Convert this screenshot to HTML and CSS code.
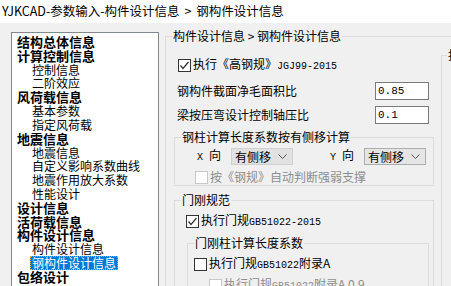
FILE: index.html
```html
<!DOCTYPE html>
<html lang="zh-CN">
<head>
    <meta charset="UTF-8">
    <title>钢构件设计信息</title>
    <link rel="stylesheet" href="styles.css">
</head>
<body>
    <div class="titlebar">YJKCAD-参数输入-构件设计信息 <span class="gt">&gt;</span> 钢构件设计信息</div>

    <div class="main">
        <div class="tree">
            <div class="node top">结构总体信息</div>
            <div class="node top">计算控制信息</div>
            <div class="node sub">控制信息</div>
            <div class="node sub">二阶效应</div>
            <div class="node top">风荷载信息</div>
            <div class="node sub">基本参数</div>
            <div class="node sub">指定风荷载</div>
            <div class="node top">地震信息</div>
            <div class="node sub">地震信息</div>
            <div class="node sub">自定义影响系数曲线</div>
            <div class="node sub">地震作用放大系数</div>
            <div class="node sub">性能设计</div>
            <div class="node top">设计信息</div>
            <div class="node top">活荷载信息</div>
            <div class="node top">构件设计信息</div>
            <div class="node sub">构件设计信息</div>
            <div class="node sub"><span class="sel">钢构件设计信息</span></div>
            <div class="node top">包络设计</div>
        </div>

        <fieldset class="group outer">
            <legend>构件设计信息 &gt; 钢构件设计信息</legend>
            <div class="cols">
                <div class="left">
                    <div class="row first">
                        <span class="chk on"><svg width="11" height="11" viewBox="0 0 11 11"><polyline points="1.5,5.5 4,8.5 9.5,2" fill="none" stroke="#333" stroke-width="1.2"/></svg></span>
                        <span>执行《高钢规》<span class="mono">JGJ99-2015</span></span>
                    </div>
                    <div class="row field">
                        <span class="lbl">钢构件截面净毛面积比</span>
                        <span class="input">0.85</span>
                    </div>
                    <div class="row field second">
                        <span class="lbl">梁按压弯设计控制轴压比</span>
                        <span class="input">0.1</span>
                    </div>

                    <fieldset class="group column">
                        <legend>钢柱计算长度系数按有侧移计算</legend>
                        <div class="row dirs">
                            <span class="dir"><span class="mono">X</span>向</span>
                            <span class="select">有侧移<svg width="9" height="6" viewBox="0 0 9 6"><polyline points="0.5,0.5 4.5,4.5 8.5,0.5" fill="none" stroke="#555" stroke-width="1"/></svg></span>
                            <span class="dir ydir"><span class="mono">Y</span>向</span>
                            <span class="select dark">有侧移<svg width="9" height="6" viewBox="0 0 9 6"><polyline points="0.5,0.5 4.5,4.5 8.5,0.5" fill="none" stroke="#555" stroke-width="1"/></svg></span>
                        </div>
                        <div class="row off">
                            <span class="chk dis"></span>
                            <span>按《钢规》自动判断强弱支撑</span>
                        </div>
                    </fieldset>

                    <fieldset class="group portal">
                        <legend>门刚规范</legend>
                        <div class="row">
                            <span class="chk on"><svg width="11" height="11" viewBox="0 0 11 11"><polyline points="1.5,5.5 4,8.5 9.5,2" fill="none" stroke="#333" stroke-width="1.2"/></svg></span>
                            <span>执行门规<span class="mono">GB51022-2015</span></span>
                        </div>
                        <fieldset class="group inner">
                            <legend>门刚柱计算长度系数</legend>
                            <div class="row">
                                <span class="chk"></span>
                                <span>执行门规<span class="mono">GB51022</span>附录A</span>
                            </div>
                            <div class="row off deep">
                                <span class="chk dis"></span>
                                <span>执行门规<span class="mono">GB51022</span>附录A 0.9</span>
                            </div>
                        </fieldset>
                    </fieldset>
                </div>

                <fieldset class="group side">
                    <legend>抗震</legend>
                </fieldset>
            </div>
        </fieldset>
    </div>
</body>
</html>
```

FILE: styles.css
```css
body {
    margin: 0;
    width: 451px;
    height: 286px;
    overflow: hidden;
    background-color: #f0f0f0;
    font-family: "Noto Sans CJK SC", "Noto Sans", sans-serif;
    font-size: 12px;
    color: #000;
}

.titlebar {
    height: 23px;
    line-height: 22px;
    padding-left: 2px;
    background-color: #fff;
    font-size: 12.5px;
    white-space: nowrap;
}
.gt { margin: 0 2px; }

.main { display: flex; align-items: flex-start; padding-top: 6px; }

/* albero a sinistra */
.tree {
    flex: none;
    width: 146px;
    height: 270px;
    margin: 3px 0 0 11px;
    padding: 2px 0 0 0;
    border: 1px solid #828790;
    background-color: #fff;
}
.node { height: 13.82px; line-height: 13.82px; white-space: nowrap; }
.node.top { padding-left: 5px; font-size: 13px; font-weight: bold; }
.node.sub { padding-left: 20px; }
.sel {
    display: inline-block;
    margin-left: -2px;
    padding: 0 1px;
    line-height: 12px;
    border: 1px dotted #f5a623;
    background-color: #0078d7;
    color: #fff;
}

/* gruppi */
.group {
    margin: 0;
    padding: 0;
    border: 1px solid #dcdcdc;
    min-width: 0;
}
.group legend { padding: 0 1px; line-height: 14px; height: 14px; white-space: nowrap; }

.outer { flex: none; width: 320px; padding: 0 0 20px 8px; margin-left: 6px; }
.outer > legend { margin-left: -2px; }

.cols { display: flex; align-items: flex-start; }
.left { flex: none; width: 260px; padding-top: 13px; }
.side { flex: none; width: 100px; height: 240px; margin: 5px 0 0 7px; }
.side legend { margin-left: 5px; }

.row { display: flex; align-items: center; height: 14px; line-height: 14px; white-space: nowrap; }
.row.first { height: 18px; padding-left: 4px; }
.row.field { height: 18px; margin-top: 8px; padding: 0 5px 0 3px; justify-content: space-between; }
.row.field.second { margin-top: 6px; }

.mono { font-family: "Liberation Mono", monospace; font-size: 10px; }

.chk {
    flex: none;
    box-sizing: border-box;
    width: 13px;
    height: 13px;
    margin-right: 2px;
    border: 1px solid #333;
    background-color: #fff;
    display: flex;
    align-items: center;
    justify-content: center;
}
.chk.dis { border-color: #c8c8c8; }
.off { color: #8d8d8d; }

.input {
    box-sizing: border-box;
    width: 54px;
    height: 18px;
    padding-left: 2px;
    line-height: 16px;
    border: 1px solid #7a7a7a;
    background-color: #fff;
    font-family: "Liberation Mono", monospace;
    font-size: 11px;
}

.column { margin-top: 6px; padding: 4px 0 1px 20px; }
.column > legend { margin-left: -14px; }
.row.dirs { height: 17px; }
.dir { margin-left: 2px; width: 34px; }
.dir .mono { margin-right: 6px; }
.ydir { margin-left: 37px; }
.select {
    box-sizing: border-box;
    display: flex;
    align-items: center;
    justify-content: space-between;
    width: 62px;
    height: 17px;
    padding: 0 5px 0 3px;
    border: 1px solid #d0d0d0;
    background-color: #e1e1e1;
}
.select.dark { border-color: #adadad; background-color: #e5e5e5; }
.column .off { margin-top: 5px; }

.portal { margin-top: 7px; padding: 7px 4px 10px 11px; }
.portal > legend { margin-left: -5px; }

.inner { margin: 8px 0 0 1px; padding: 7px 0 20px 6px; }
.inner > legend { margin-left: 0; }
.row.deep { margin-top: 7px; padding-left: 15px; }
```
